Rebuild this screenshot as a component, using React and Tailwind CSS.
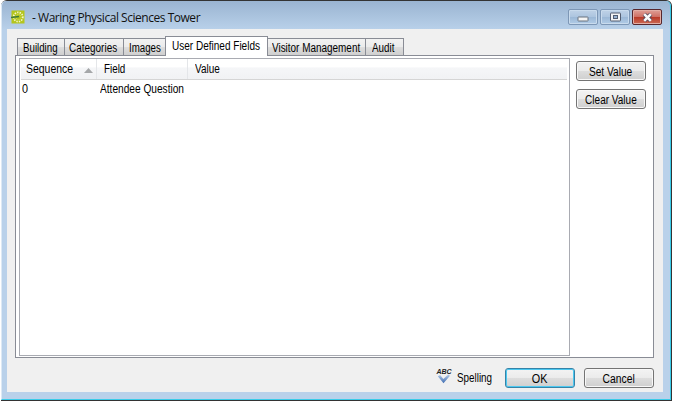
import React from "react";

const tabs = [
  { label: "Building", box: "w-[48px] pl-[5px]", fit: "scale-x-[.81]" },
  { label: "Categories", box: "w-[60px] pl-[4px]", fit: "scale-x-[.83]" },
  { label: "Images", box: "w-[43px] pl-[5px]", fit: "scale-x-[.81]" },
  { label: "User Defined Fields", box: "w-[103px] pl-[6px]", fit: "scale-x-[.835]", active: true },
  { label: "Visitor Management", box: "w-[99px] pl-[4px]", fit: "scale-x-[.828]" },
  { label: "Audit", box: "w-[39px] pl-[6px]", fit: "scale-x-[.82]" },
];

function AppIcon() {
  return (
    <svg width="14" height="14" viewBox="0 0 14 14">
      <rect x="0.5" y="0.5" width="13" height="13" fill="#b4c51d" />
      <circle cx="7.2" cy="7" r="4.6" fill="none" stroke="#f4f7cc" strokeWidth="1.7" strokeDasharray="1.4 1.1" />
      <circle cx="7.6" cy="7" r="2.6" fill="none" stroke="#dce37a" strokeWidth="0.8" strokeDasharray="1 1" />
      <path d="M0 7.6L8 6.6" stroke="#3f7a3a" strokeWidth="1.5" />
    </svg>
  );
}

function SpellIcon() {
  return (
    <svg width="17" height="17" viewBox="0 0 17 17">
      <defs>
        <linearGradient id="check" x1="0" y1="0" x2="0" y2="1">
          <stop offset="0" stopColor="#b4cbe9" />
          <stop offset="1" stopColor="#3e6cb0" />
        </linearGradient>
      </defs>
      <text x="0.5" y="5.8" fontSize="7" fontWeight="700" fontStyle="italic" fontFamily="Liberation Sans, sans-serif" fill="#222" letterSpacing="0">ABC</text>
      <path d="M1.8 8.2L4.2 7L7.3 11L12.2 6.6L14 7.8L7.5 15.3Z" fill="url(#check)" />
    </svg>
  );
}

function Fit({ by, center, children }) {
  return <span className={"inline-block " + (center ? "origin-center " : "origin-left ") + by}>{children}</span>;
}

function CaptionButton({ close, children }) {
  return (
    <div
      className={
        "flex h-[16px] w-[30px] items-center justify-center rounded-[2px] border " +
        (close
          ? "border-[#57262c] bg-[linear-gradient(#dfa097_0%,#cf7065_48%,#b93a28_52%,#cc6a55_100%)] shadow-[inset_0_0_0_1px_#e3aea5]"
          : "border-[#7d97b6] bg-[linear-gradient(#bfd2e7_0%,#adc5df_48%,#9cb8d6_52%,#b1cce7_100%)] shadow-[inset_0_0_0_1px_#c9dbed]")
      }
    >
      {children}
    </div>
  );
}

function Button({ primary, className, fit, children }) {
  return (
    <div
      className={
        "flex h-[20px] items-center justify-center rounded-[3px] border bg-[linear-gradient(#f3f3f3_0%,#ebebeb_49%,#dddddd_51%,#cfcfcf_100%)] pt-px pr-px " +
        (primary
          ? "border-[#3583a8] shadow-[inset_0_0_0_1px_#4cc8f0] "
          : "border-[#747474] shadow-[inset_0_0_0_1px_#f8f8f8] ") +
        className
      }
    >
      <Fit center by={fit}>{children}</Fit>
    </div>
  );
}

export default function App() {
  return (
    <div className="h-[402px] w-[673px] bg-white pl-px font-['Liberation_Sans',Arial,sans-serif] text-[12px] leading-[14px] whitespace-nowrap text-black">
      <div className="flex h-[401px] w-[671px] flex-col rounded-t-[6px] border-t border-r border-b border-[#333] bg-[#b9d1ea]">
        <div className="flex h-[399px] flex-col rounded-t-[5px] border-r border-b border-l border-[#3acbe8] border-l-[#dce9f5] bg-[linear-gradient(#9ab4d1_0px,#b9d1ea_29px,#b9d1ea_100%)] pr-[6px] pl-[5px]">
          <header className="flex h-[28px] shrink-0 items-start pl-[4px]">
            <div className="mt-[9px]"><AppIcon /></div>
            <div className="mt-[10px] ml-[7px] font-['Open_Sans',sans-serif] text-[12px] tracking-[-0.47px] text-[#111]">- Waring Physical Sciences Tower</div>
            <div className="mt-[8px] mr-[2px] ml-auto flex gap-[2px]">
              <CaptionButton>
                <svg className="mt-[4px]" width="12" height="6" viewBox="0 0 12 6"><rect x="1" y="1" width="10" height="4" rx="0.5" fill="#f4f4f4" stroke="#68727e" /></svg>
              </CaptionButton>
              <CaptionButton>
                <svg width="12" height="10" viewBox="0 0 12 10"><rect x="1.5" y="1" width="10" height="8" rx="0.5" fill="#f4f4f4" stroke="#535d70" /><rect x="4.5" y="3.5" width="4" height="3" fill="#9ab4d2" stroke="#535d70" /></svg>
              </CaptionButton>
              <CaptionButton close>
                <svg width="13" height="11" viewBox="0 0 13 11"><path d="M3.2 2.2L9.8 8.8M9.8 2.2L3.2 8.8" stroke="#55495a" strokeWidth="4.2" /><path d="M3.2 2.2L9.8 8.8M9.8 2.2L3.2 8.8" stroke="#fafafa" strokeWidth="2.6" /></svg>
              </CaptionButton>
            </div>
          </header>
          <main className="flex h-[363px] w-[656px] flex-col bg-[#f0f0f0] pl-[8px]">
            <nav className="flex h-[26px] shrink-0 items-end pl-[2px]">
              {tabs.map((t) => (
                <div
                  key={t.label}
                  className={
                    "shrink-0 border border-b-0 border-[#898c95] " +
                    (t.active
                      ? "relative z-10 -mr-px -mb-px h-[20px] bg-white pt-[2px] "
                      : "-mr-px h-[17px] bg-[linear-gradient(#f2f2f2_0%,#ebebeb_48%,#dddddd_52%,#cfcfcf_100%)] pt-[2px] ") +
                    t.box
                  }
                >
                  <Fit by={t.fit}>{t.label}</Fit>
                </div>
              ))}
            </nav>
            <section className="flex h-[303px] w-[639px] shrink-0 gap-[7px] border border-[#898c95] bg-white pt-[2px] pl-[3px]">
              <div className="h-[298px] w-[551px] shrink-0 border border-[#a9abb2] bg-white pl-px">
                <div className="mr-[2px] flex h-[21px] border-b border-[#d5d5d5] bg-[linear-gradient(#ffffff_0%,#ffffff_40%,#f5f6f8_44%,#f1f2f4_100%)] pt-[3px]">
                  <div className="-mt-[3px] flex w-[76px] justify-between border-r border-[#e4e6e9] pt-[3px] pr-[3px] pl-[5px]">
                    <div className="w-[47px]"><Fit by="scale-x-[.87]">Sequence</Fit></div>
                    <svg className="mt-[6px]" width="9" height="5" viewBox="0 0 9 5"><path d="M0 5L4.5 0L9 5Z" fill="#a5a7a9" /></svg>
                  </div>
                  <div className="-mt-[3px] w-[91px] border-r border-[#e4e6e9] pt-[3px] pl-[7px]"><Fit by="scale-x-[.82]">Field</Fit></div>
                  <div className="pl-[7px]"><Fit by="scale-x-[.83]">Value</Fit></div>
                </div>
                <div className="flex pt-[2px]">
                  <div className="w-[77px] pl-px"><Fit by="scale-x-[.9]">0</Fit></div>
                  <div className="pl-[2px]"><Fit by="scale-x-[.845]">Attendee Question</Fit></div>
                </div>
              </div>
              <div className="-ml-px flex flex-col gap-[8px] pt-[3px]">
                <Button className="w-[70px]" fit="scale-x-[.845]">Set Value</Button>
                <Button className="w-[70px]" fit="scale-x-[.835]">Clear Value</Button>
              </div>
            </section>
            <footer className="flex items-start pt-[10px] pr-[9px]">
              <div className="ml-auto flex items-start">
                <SpellIcon />
                <div className="mt-[3px] ml-[4px] w-[48px]"><Fit by="scale-x-[.82]">Spelling</Fit></div>
              </div>
              <Button primary className="w-[70px]" fit="scale-x-[.9]">OK</Button>
              <Button className="ml-[9px] w-[70px]" fit="scale-x-[.86]">Cancel</Button>
            </footer>
          </main>
        </div>
      </div>
    </div>
  );
}
